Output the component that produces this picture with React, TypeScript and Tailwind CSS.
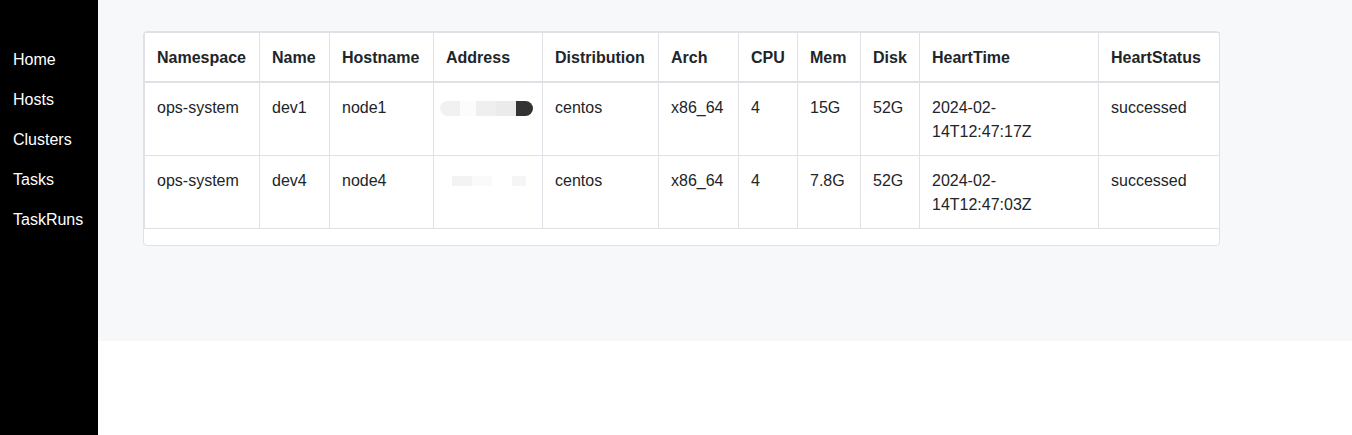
import React from "react";

const cols = [115, 70, 104, 109, 116, 80, 59, 63, 59, 179, 121];
const headers = ["Namespace", "Name", "Hostname", "Address", "Distribution", "Arch", "CPU", "Mem", "Disk", "HeartTime", "HeartStatus"];

function Redacted1() {
  return (
    <div className="flex items-center h-[16px] mt-[4px]">
      <div className="w-[20px] h-[15px] rounded-l-full bg-[#f1f1f1]" />
      <div className="w-[16px] h-[15px] bg-[#fcfcfc]" />
      <div className="w-[20px] h-[15px] bg-[#efefef]" />
      <div className="w-[20px] h-[15px] bg-[#ebebeb]" />
      <div className="w-[17px] h-[15px] rounded-r-[8px] bg-[#333333]" />
    </div>
  );
}

function Redacted2() {
  return (
    <div className="flex items-center h-[16px] mt-[4px] pl-[12px]">
      <div className="w-[20px] h-[10px] bg-[#f3f3f3]" />
      <div className="w-[20px] h-[10px] bg-[#fafafa]" />
      <div className="w-[20px] h-[10px] bg-[#ffffff]" />
      <div className="w-[14px] h-[10px] bg-[#f5f5f5]" />
    </div>
  );
}

const rows = [
  ["ops-system", "dev1", "node1", "R1", "centos", "x86_64", "4", "15G", "52G", "2024-02-14T12:47:17Z", "successed"],
  ["ops-system", "dev4", "node4", "R2", "centos", "x86_64", "4", "7.8G", "52G", "2024-02-14T12:47:03Z", "successed"],
];

export default function App() {
  return (
    <div
      className="flex w-[1352px] h-[435px] bg-white text-[16px] leading-[24px] text-[#212529]"
      style={{ fontFamily: '"Liberation Sans", Arial, sans-serif' }}
    >
      <nav className="w-[98px] shrink-0 bg-black text-white pt-[40px] pl-[13px]">
        {["Home", "Hosts", "Clusters", "Tasks", "TaskRuns"].map((t) => (
          <div key={t} className="py-[8px]">
            {t}
          </div>
        ))}
      </nav>
      <div className="flex-1 flex flex-col">
        <main className="bg-[#f7f8fa] h-[341px] pt-[31px] pl-[45px]">
          <div className="w-[1077px] bg-white border border-[#dee2e6] rounded-[4px]">
            <table className="table-fixed border-collapse mb-[16px] w-[1075px]">
              <colgroup>
                {cols.map((w, i) => (
                  <col key={i} style={{ width: w }} />
                ))}
              </colgroup>
              <thead>
                <tr>
                  {headers.map((h) => (
                    <th
                      key={h}
                      className="border border-[#dee2e6] border-b-2 text-left font-bold align-bottom px-[12px] pt-[13px] pb-[11px] whitespace-nowrap"
                    >
                      {h}
                    </th>
                  ))}
                </tr>
              </thead>
              <tbody>
                {rows.map((r, ri) => (
                  <tr key={ri}>
                    {r.map((c, ci) => (
                      <td
                        key={ci}
                        className={`border border-[#dee2e6] align-top pt-[13px] pb-[11px] ${ci === 3 ? "px-[6px]" : "px-[12px]"}`}
                      >
                        {c === "R1" ? <Redacted1 /> : c === "R2" ? <Redacted2 /> : ci === 9 ? (
                          <>
                            {c.slice(0, 8)}
                            <br />
                            {c.slice(8)}
                          </>
                        ) : (
                          c
                        )}
                      </td>
                    ))}
                  </tr>
                ))}
              </tbody>
            </table>
          </div>
        </main>
      </div>
    </div>
  );
}
